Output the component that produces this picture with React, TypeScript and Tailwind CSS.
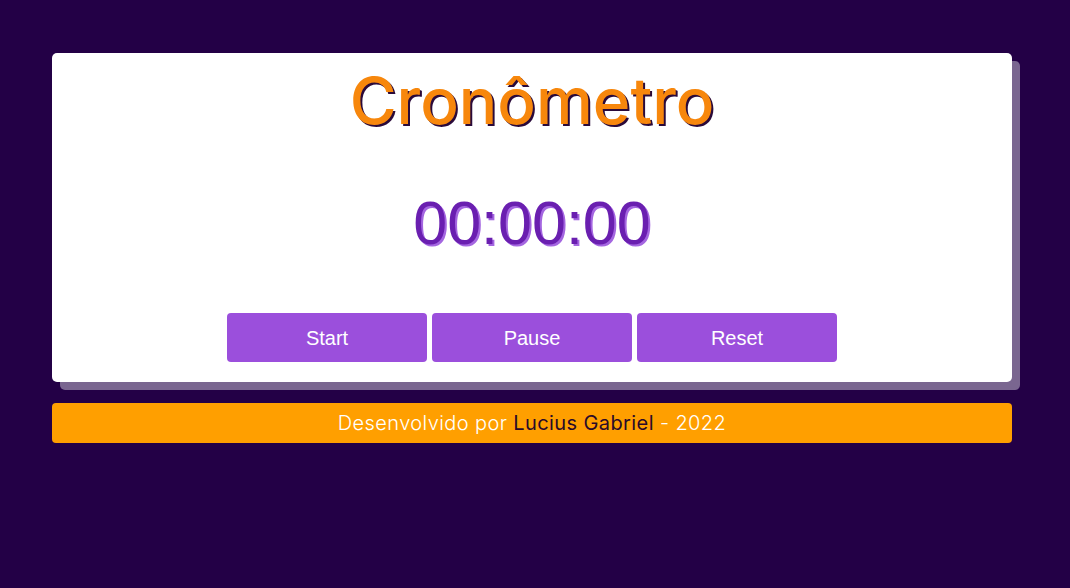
export default function App() {
  return (
    <div className="min-h-[588px] bg-[#230046] px-[52px] pt-[53px]">
      <div className="flex h-[329px] w-[960px] flex-col items-center rounded-[5px] bg-white shadow-[8px_8px_0_0_#7a6690]">
        <h1 className="mt-[12px] font-['Inter','Noto_Sans',sans-serif] text-[64px] font-medium leading-[72px] text-[#f7870c] [text-shadow:2px_2px_0_#2a0a3a]">
          Cronômetro
        </h1>
        <p className="mt-[51px] font-['Liberation_Sans',Arial,sans-serif] text-[61px] leading-[70px] text-[#6a1fb0] [text-shadow:2px_2px_0_#a466e0]">
          00:00:00
        </p>
        <div className="mt-[55px] flex gap-[5px]">
          {["Start", "Pause", "Reset"].map((label) => (
            <button
              key={label}
              className="h-[49px] w-[200px] rounded-[4px] bg-[#9b4fdc] font-['Liberation_Sans',Arial,sans-serif] text-[20px] text-white"
            >
              {label}
            </button>
          ))}
        </div>
      </div>
      <footer className="mt-[21px] flex h-[40px] w-[960px] items-center justify-center rounded-[4px] bg-[#ff9f00] font-['Inter','Noto_Sans',sans-serif] text-[20px] font-light tracking-[0.4px] text-white">
        Desenvolvido por&nbsp;<span className="font-normal text-[#2a0a2a]">Lucius Gabriel</span>&nbsp;- 2022
      </footer>
    </div>
  );
}
